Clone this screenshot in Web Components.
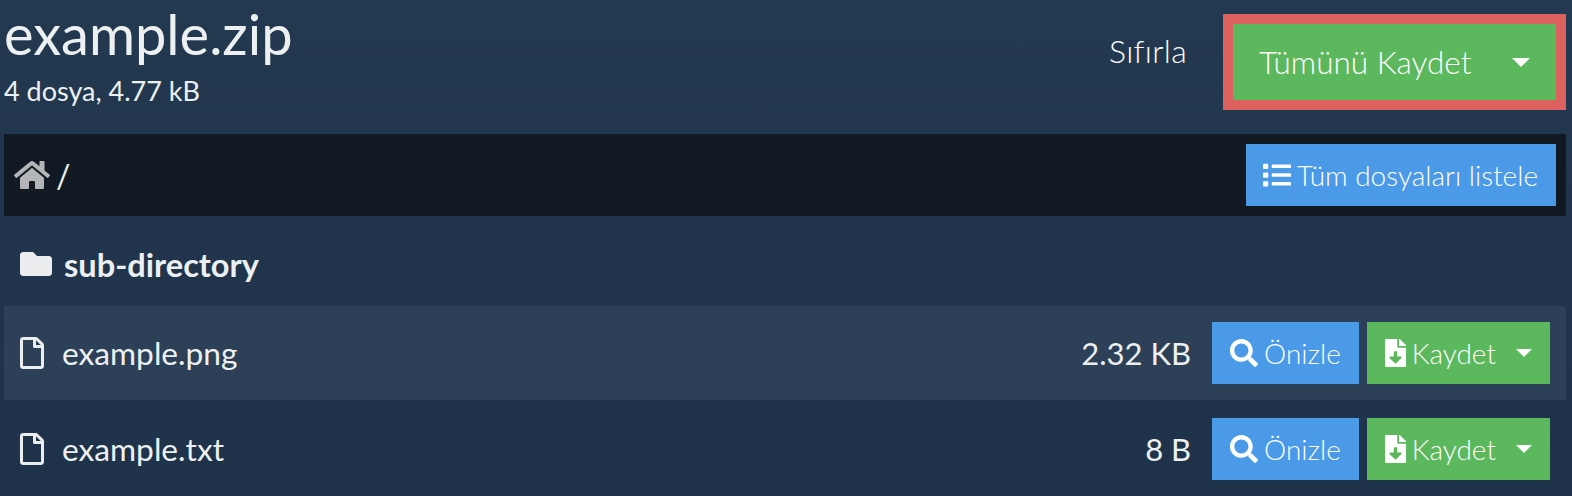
<!doctype html>
<html lang="tr">
<head>
<meta charset="UTF-8">
<title>example.zip</title>
<style>
  html, body { margin: 0; height: 100%; }
  body {
    background: linear-gradient(#23394f 0, #1e3249 496px);
    color: #ecf0f1;
    font-family: Lato, "Open Sans", sans-serif;
    overflow: hidden;
  }
</style>
</head>
<body>

<template id="tpl-header">
  <style>
    :host { display: flex; align-items: flex-start; justify-content: space-between; height: 134px; padding: 0 6px 0 4px; box-sizing: border-box; }
    .name { font-size: 56px; line-height: 62px; margin-top: 3px; font-weight: 400; }
    .info { font-size: 27px; line-height: 32px; margin-top: 10px; }
    .actions { display: flex; align-items: flex-start; margin-top: 14px; }
    .reset { font-size: 32px; font-weight: 300; line-height: 74px; margin-right: 36px; letter-spacing: .3px; color: #fff; }
    .ring { border: 10px solid #dd615e; display: flex; }
  </style>
  <div>
    <div class="name"><slot name="name"></slot></div>
    <div class="info"><slot name="info"></slot></div>
  </div>
  <div class="actions">
    <span class="reset"><slot name="reset"></slot></span>
    <span class="ring"><slot name="save"></slot></span>
  </div>
</template>

<template id="tpl-btn">
  <style>
    :host { display: inline-flex; align-items: center; box-sizing: border-box; height: 62px; padding: 0 18px; font-size: 28px; font-weight: 300; color: #fff; background: #4b9ae8; white-space: nowrap; }
    :host([kind=green]) { background: #5cb85c; }
    .caret { display: none; width: 0; height: 0; margin-left: 20px; border: var(--caret, 8.5px) solid transparent; border-top-color: #fff; border-bottom: 0; }
    :host([caret]) .caret { display: block; }
  </style>
  <slot></slot><span class="caret"></span>
</template>

<template id="tpl-icon">
  <style>
    :host { display: inline-block; line-height: 0; flex: none; }
    svg { display: block; height: var(--h, 28px); width: auto; fill: currentColor; }
  </style>
  <svg xmlns="http://www.w3.org/2000/svg"><path></path></svg>
</template>

<template id="tpl-path">
  <style>
    :host { display: flex; align-items: center; justify-content: space-between; height: 82px; padding: 0 10px 0 10px; box-sizing: border-box; background: #111a23; font-size: 32px; }
    .where { display: flex; align-items: center; gap: 6px; }
  </style>
  <div class="where"><slot name="where"></slot></div>
  <slot name="action"></slot>
</template>

<template id="tpl-row">
  <style>
    :host { display: flex; align-items: center; height: 94px; margin-bottom: 2px; padding: 0 16px 0 16px; box-sizing: border-box; font-size: 31.7px; }
    :host([active]) { background: #2c4057; border-top: 1px solid #2a3f55; border-bottom: 1px solid #283c52; }
    :host([dir]) { font-size: 32.6px; font-weight: 700; height: 90px; padding-top: 6px; margin-bottom: 0; }
    .ico { width: 42px; flex: none; display: flex; color: #ebedef; }
    :host([dir]) .ico { width: 44px; }
    .label { flex: 1; min-width: 0; }
    .size { margin-right: 21px; font-size: 31px; }
    .tools { display: flex; gap: 8px; }
  </style>
  <span class="ico"><slot name="icon"></slot></span>
  <span class="label"><slot></slot></span>
  <span class="size"><slot name="size"></slot></span>
  <span class="tools"><slot name="tools"></slot></span>
</template>

<zip-header>
  <span slot="name">example.zip</span>
  <span slot="info">4 dosya, 4.77 kB</span>
  <span slot="reset">Sıfırla</span>
  <zip-btn slot="save" kind="green" caret style="--caret:9.5px;height:76px;padding:0 26px 0 26px;font-size:31.5px;width:323px;justify-content:space-between">Tümünü Kaydet</zip-btn>
</zip-header>

<div style="padding:0 6px 0 4px">
  <zip-path>
    <span slot="where" style="display:contents">
      <fa-icon name="home" style="--h:32px;color:#b3b5b6"></fa-icon>
      <span>/</span>
    </span>
    <zip-btn slot="action" style="padding-left:17px"><fa-icon name="list" style="--h:28px;margin-right:6px"></fa-icon>Tüm dosyaları listele</zip-btn>
  </zip-path>

  <zip-row dir>
    <fa-icon slot="icon" name="folder" style="--h:32px"></fa-icon>
    sub-directory
  </zip-row>

  <zip-row active>
    <fa-icon slot="icon" name="file" style="--h:32px"></fa-icon>
    example.png
    <span slot="size">2.32 KB</span>
    <zip-btn slot="tools"><fa-icon name="search" style="--h:28px;margin-right:6px"></fa-icon>Önizle</zip-btn>
    <zip-btn slot="tools" kind="green" caret><fa-icon name="download" style="--h:28px;margin-right:6px"></fa-icon>Kaydet</zip-btn>
  </zip-row>

  <zip-row>
    <fa-icon slot="icon" name="file" style="--h:32px"></fa-icon>
    example.txt
    <span slot="size">8 B</span>
    <zip-btn slot="tools"><fa-icon name="search" style="--h:28px;margin-right:6px"></fa-icon>Önizle</zip-btn>
    <zip-btn slot="tools" kind="green" caret><fa-icon name="download" style="--h:28px;margin-right:6px"></fa-icon>Kaydet</zip-btn>
  </zip-row>
</div>

<script>
var ICONS = {
  home: ['0 0 576 512', 'M280.37 148.26L96 300.11V464a16 16 0 0 0 16 16l112.06-.29a16 16 0 0 0 15.92-16V368a16 16 0 0 1 16-16h64a16 16 0 0 1 16 16v95.64a16 16 0 0 0 16 16.05L464 480a16 16 0 0 0 16-16V300L295.67 148.26a12.19 12.19 0 0 0-15.3 0zM571.6 251.47L488 182.56V44.05a12 12 0 0 0-12-12h-56a12 12 0 0 0-12 12v72.61L318.47 43a48 48 0 0 0-61 0L4.34 251.47a12 12 0 0 0-1.6 16.9l25.5 31A12 12 0 0 0 45.15 301l235.22-193.74a12.19 12.19 0 0 1 15.3 0L530.9 301a12 12 0 0 0 16.9-1.6l25.5-31a12 12 0 0 0-1.7-16.93z'],
  list: ['0 0 512 512', 'M80 368H16a16 16 0 0 0-16 16v64a16 16 0 0 0 16 16h64a16 16 0 0 0 16-16v-64a16 16 0 0 0-16-16zm0-320H16A16 16 0 0 0 0 64v64a16 16 0 0 0 16 16h64a16 16 0 0 0 16-16V64a16 16 0 0 0-16-16zm0 160H16a16 16 0 0 0-16 16v64a16 16 0 0 0 16 16h64a16 16 0 0 0 16-16v-64a16 16 0 0 0-16-16zm416 176H176a16 16 0 0 0-16 16v32a16 16 0 0 0 16 16h320a16 16 0 0 0 16-16v-32a16 16 0 0 0-16-16zm0-320H176a16 16 0 0 0-16 16v32a16 16 0 0 0 16 16h320a16 16 0 0 0 16-16V80a16 16 0 0 0-16-16zm0 160H176a16 16 0 0 0-16 16v32a16 16 0 0 0 16 16h320a16 16 0 0 0 16-16v-32a16 16 0 0 0-16-16z'],
  search: ['0 0 512 512', 'M505 442.7L405.3 343c-4.5-4.5-10.6-7-17-7H372c27.6-35.3 44-79.7 44-128C416 93.1 322.9 0 208 0S0 93.1 0 208s93.1 208 208 208c48.3 0 92.7-16.4 128-44v16.3c0 6.4 2.5 12.5 7 17l99.7 99.7c9.4 9.4 24.6 9.4 33.9 0l28.3-28.3c9.4-9.4 9.4-24.6.1-34zM208 336c-70.7 0-128-57.2-128-128 0-70.7 57.2-128 128-128 70.7 0 128 57.2 128 128 0 70.7-57.2 128-128 128z'],
  download: ['0 0 384 512', 'M224 136V0H24C10.7 0 0 10.7 0 24v464c0 13.3 10.7 24 24 24h336c13.3 0 24-10.7 24-24V160H248c-13.2 0-24-10.8-24-24zm76.45 211.36l-96.42 95.7c-6.65 6.61-17.39 6.61-24.04 0l-96.42-95.7C73.42 337.29 80.54 320 94.82 320H160v-80c0-8.84 7.16-16 16-16h32c8.84 0 16 7.16 16 16v80h65.18c14.28 0 21.4 17.29 11.27 27.36zM377 105L279.1 7c-4.5-4.5-10.6-7-17-7H256v128h128v-6.1c0-6.3-2.5-12.4-7-16.9z'],
  folder: ['0 0 512 512', 'M464 128H272l-64-64H48C21.49 64 0 85.49 0 112v288c0 26.51 21.49 48 48 48h416c26.51 0 48-21.49 48-48V176c0-26.51-21.49-48-48-48z'],
  file: ['0 0 384 512', 'M369.9 97.9L286 14C277 5 264.8-.1 252.1-.1H48C21.5 0 0 21.5 0 48v416c0 26.5 21.5 48 48 48h288c26.5 0 48-21.5 48-48V131.9c0-12.7-5.1-25-14.1-34zM332.1 128H256V51.9l76.1 76.1zM48 464V48h160v104c0 13.3 10.7 24 24 24h104v288H48z']
};

function simple(tag, id) {
  customElements.define(tag, class extends HTMLElement {
    constructor() {
      super();
      var root = this.attachShadow({mode: 'open'});
      root.appendChild(document.getElementById(id).content.cloneNode(true));
    }
  });
}
simple('zip-header', 'tpl-header');
simple('zip-btn', 'tpl-btn');
simple('zip-path', 'tpl-path');
simple('zip-row', 'tpl-row');

customElements.define('fa-icon', class extends HTMLElement {
  constructor() {
    super();
    var root = this.attachShadow({mode: 'open'});
    root.appendChild(document.getElementById('tpl-icon').content.cloneNode(true));
  }
  connectedCallback() {
    var icon = ICONS[this.getAttribute('name')];
    this.shadowRoot.querySelector('svg').setAttribute('viewBox', icon[0]);
    this.shadowRoot.querySelector('path').setAttribute('d', icon[1]);
  }
});
</script>
</body>
</html>
